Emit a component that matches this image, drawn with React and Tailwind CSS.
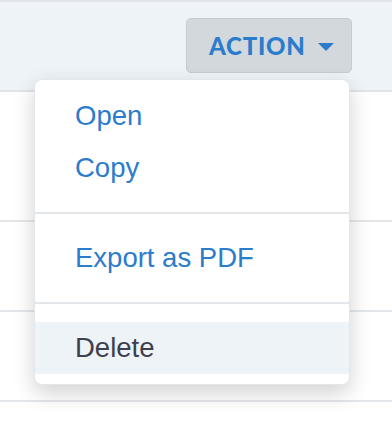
import { useState } from 'react';

const items = [
  [{ label: 'Open' }, { label: 'Copy' }],
  [{ label: 'Export as PDF' }],
  [{ label: 'Delete', active: true }],
];

export default function App() {
  const [open] = useState(true);

  return (
    <div className="w-[392px] h-[424px] bg-white overflow-hidden" style={{ fontFamily: '"Liberation Sans", Arial, sans-serif' }}>
      <div className="border-t-2 border-b-2 border-[#e1e5e9] bg-[#eef3f7] h-[92px] flex justify-end pr-[40px] pt-[16px]">
        <div className="relative h-[55px]">
          <button className="h-[55px] w-[166px] rounded-[5px] border border-[#c6cbd0] bg-[#d3d8dc] flex items-center pl-[22px] gap-[12px] text-[#2b7ccb]">
            <span className="text-[24px] font-black tracking-[0.8px] leading-none" style={{ fontFamily: 'Lato, "Liberation Sans", sans-serif' }}>ACTION</span>
            <svg width="16" height="8" viewBox="0 0 16 8" className="mt-[2px]">
              <path d="M0 0 L16 0 L8 8 Z" fill="#2b7ccb" />
            </svg>
          </button>

          {open && (
            <div className="absolute right-[2px] top-[61px] w-[316px] z-10 bg-white border border-[#e3e6ea] rounded-[8px] py-[10px] shadow-[0_8px_22px_rgba(0,0,0,0.18)]">
              {items.map((group, gi) => (
                <div key={gi}>
                  {gi > 0 && <div className="h-[2px] bg-[#e4e7ea] my-[18px]" />}
                  {group.map((it) => (
                    <div
                      key={it.label}
                      className={`h-[52px] flex items-center px-[40px] text-[27.5px] ${it.active ? 'bg-[#eef3f7] text-[#3d404e]' : 'text-[#2b7ccb]'}`}
                    >
                      {it.label}
                    </div>
                  ))}
                </div>
              ))}
            </div>
          )}
        </div>
      </div>

      <div className="h-[130px] border-b-2 border-[#e4e7ea]" />
      <div className="h-[90px] border-b-2 border-[#e4e7ea]" />
      <div className="h-[90px] border-b-2 border-[#e4e7ea]" />
    </div>
  );
}
